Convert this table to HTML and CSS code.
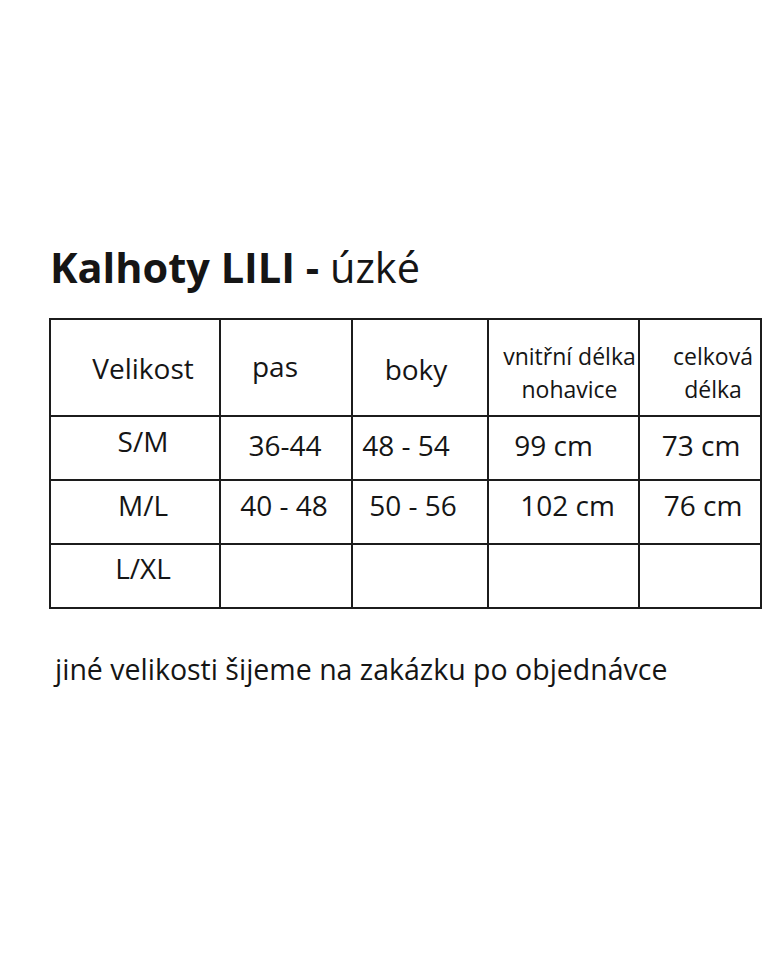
FILE: index.html
```html
<!DOCTYPE html>
<html lang="cs">
<head>
<meta charset="utf-8">
<title>Kalhoty LILI - úzké</title>
<link rel="stylesheet" href="styles.css">
</head>
<body>
<main class="page">
  <h1 class="title"><strong>Kalhoty LILI -</strong> úzké</h1>
  <div class="chart">
    <div class="cell head c1">Velikost</div>
    <div class="cell head c2 hp s-m11">pas</div>
    <div class="cell head c3 hb s-m4">boky</div>
    <div class="cell head c4 small s-p6">vnitřní délka<br>nohavice</div>
    <div class="cell head c5 small s-p13">celková<br>délka</div>

    <div class="cell r1 c1 lo">S/M</div>
    <div class="cell r1 c2 s-m1">36-44</div>
    <div class="cell r1 c3 s-m14">48 - 54</div>
    <div class="cell r1 c4 s-m10">99 cm</div>
    <div class="cell r1 c5 s-p1">73 cm</div>

    <div class="cell r2 c1">M/L</div>
    <div class="cell r2 c2 s-m2">40 - 48</div>
    <div class="cell r2 c3 s-m7">50 - 56</div>
    <div class="cell r2 c4 s-p4">102 cm</div>
    <div class="cell r2 c5 s-p3">76 cm</div>

    <div class="cell r3 c1">L/XL</div>
    <div class="cell r3 c2"></div>
    <div class="cell r3 c3"></div>
    <div class="cell r3 c4"></div>
    <div class="cell r3 c5"></div>
  </div>
  <p class="note">jiné velikosti šijeme na zakázku po objednávce</p>
</main>
</body>
</html>
```

FILE: styles.css
```css
html, body {
  margin: 0;
  padding: 0;
  background: #ffffff;
}

body {
  font-family: "Open Sans", "Noto Sans", sans-serif;
  color: #151515;
  width: 768px;
  height: 960px;
  overflow: hidden;
}

.page {
  padding-top: 239px;
  padding-left: 49px;
}

.title {
  margin: 0 0 0 1px;
  font-size: 41.5px;
  line-height: 56px;
  font-weight: 400;
  letter-spacing: 0;
  color: #151515;
}

.title strong {
  font-weight: 700;
}

.chart {
  margin-top: 23px;
  width: 713px;
  display: grid;
  grid-template-columns: 168px 130px 134px 149px 120px;
  grid-template-rows: 95px 62px 62px 62px;
  gap: 2px;
  padding: 2px;
  box-sizing: border-box;
  background: #1c1c1c;
}

.cell {
  background: #ffffff;
  font-size: 28px;
  line-height: 37px;
  text-align: center;
  box-sizing: border-box;
  white-space: nowrap;
}

.head {
  padding-top: 30px;
}

.head.hp {
  padding-top: 28px;
}

.head.hb {
  padding-top: 31px;
}

.head.small {
  font-size: 23px;
  line-height: 33px;
  padding-top: 20px;
}

.r1 {
  padding-top: 10px;
}

.r1.lo {
  padding-top: 6px;
}

.r2 {
  padding-top: 6px;
}

.r3 {
  padding-top: 5px;
}

/* column-wide horizontal shift */
.c1 {
  padding-left: 16px;
}

/* per-cell horizontal shifts (s-mN: left by N px, s-pN: right by N px) */
.s-m1 { padding-right: 2px; }
.s-m2 { padding-right: 4px; }
.s-m4 { padding-right: 8px; }
.s-m7 { padding-right: 14px; }
.s-m10 { padding-right: 20px; }
.s-m11 { padding-right: 22px; }
.s-m14 { padding-right: 28px; }
.s-p1 { padding-left: 2px; }
.s-p3 { padding-left: 6px; }
.s-p4 { padding-left: 8px; }
.s-p6 { padding-left: 12px; }
.s-p13 { padding-left: 26px; }

.note {
  margin: 41px 0 0 6px;
  font-size: 28.5px;
  line-height: 38px;
  color: #151515;
}
```
